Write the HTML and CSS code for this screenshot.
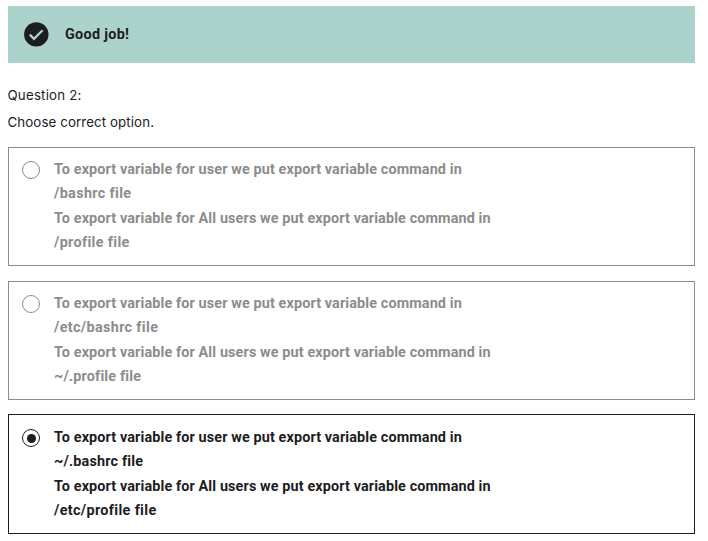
FILE: index.html
```html
<!DOCTYPE html>
<html lang="en">
<head>
<meta charset="utf-8">
<title>Question 2</title>
<link rel="stylesheet" href="styles.css">
</head>
<body>
<main class="quiz">
  <div class="banner">
    <svg class="check" viewBox="0 0 25 25" aria-hidden="true">
      <circle cx="12.3" cy="12.4" r="12.2" fill="#1c1d1f"/>
      <path d="M5.8 12.6 10 16.8 18.6 8.2" fill="none" stroke="#acd2cc" stroke-width="2.3"/>
    </svg>
    <span class="banner-text">Good job!</span>
  </div>
  <div class="question">
    <p class="number">Question 2:</p>
    <p class="prompt">Choose correct option.</p>
  </div>
  <div class="options">
    <div class="option">
      <span class="radio"></span>
      <div class="answer">
        <p>To export variable for user we put export variable command in</p>
        <p class="file">/bashrc file</p>
        <p>To export variable for All users we put export variable command in</p>
        <p class="file">/profile file</p>
      </div>
    </div>
    <div class="option">
      <span class="radio"></span>
      <div class="answer">
        <p>To export variable for user we put export variable command in</p>
        <p class="file">/etc/bashrc file</p>
        <p>To export variable for All users we put export variable command in</p>
        <p class="file home">~/.profile file</p>
      </div>
    </div>
    <div class="option selected">
      <span class="radio"></span>
      <div class="answer">
        <p>To export variable for user we put export variable command in</p>
        <p class="file home">~/.bashrc file</p>
        <p>To export variable for All users we put export variable command in</p>
        <p class="file">/etc/profile file</p>
      </div>
    </div>
  </div>
</main>
</body>
</html>
```
FILE: styles.css
```css
* { box-sizing: border-box; }
body { margin: 0; background: #fff; color: #1c1d1f; }
p { margin: 0; }
.quiz { width: 687px; margin: 6px 0 0 8px; }
.banner {
  display: flex;
  align-items: center;
  gap: 16px;
  height: 57px;
  padding-left: 16px;
  background: #acd2cc;
}
.check { width: 25px; height: 25px; }
.banner-text { font: 700 14.4px/24px Roboto, sans-serif; letter-spacing: 0.3px; }
.question {
  margin-top: 19px;
  height: 65px;
  font: 400 13.3px/27px Inter, sans-serif;
  letter-spacing: 0.1px;
}
.number { margin-left: -0.5px; letter-spacing: 0.2px; }
.prompt { margin-left: -0.5px; }
.options { display: flex; flex-direction: column; gap: 15px; }
.option {
  display: flex;
  height: 119px;
  padding: 10px 0 0 13px;
  border: 1px solid #8c8c8c;
  color: #8c8c8c;
}
.option.selected {
  height: 120px;
  margin-top: -1px;
  padding-top: 11px;
  border-color: #1c1d1f;
  color: #1c1d1f;
}
.radio {
  display: flex;
  align-items: center;
  justify-content: center;
  width: 18px;
  height: 18px;
  margin: 3px 14px 0 0;
  border: 1px solid currentColor;
  border-radius: 50%;
}
.selected .radio::after {
  content: "";
  width: 9px;
  height: 9px;
  border-radius: 50%;
  background: currentColor;
}
.answer {
  font: 700 14.4px/24.3px Roboto, sans-serif;
  letter-spacing: 0.12px;
}
.file { letter-spacing: 0.34px; }
.home { letter-spacing: 0.16px; }
```
